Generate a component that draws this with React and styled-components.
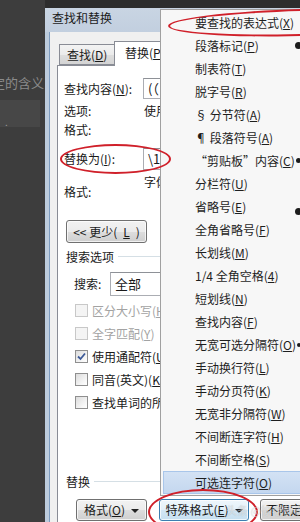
import React from "react";
import styled, { createGlobalStyle } from "styled-components";

const Global = createGlobalStyle`
  html, body { margin: 0; padding: 0; }
  body {
    width: 300px; height: 522px; overflow: hidden; background: #3d3d3d;
    font-family: "Noto Sans CJK SC", "Noto Sans", sans-serif; font-size: 12px;
  }
`;

const Screen = styled.div`
  position: relative;
  width: 300px;
  height: 522px;
  overflow: hidden;
  display: flex;
  background: #3d3d3d;
  color: #1a1a1a;
  font-family: "Noto Sans CJK SC", "Noto Sans", sans-serif;
  font-size: 12px;
`;

const DocSide = styled.div`
  width: 45px;
  flex: none;
  display: flex;
  flex-direction: column;
  overflow: hidden;
`;

const DocText = styled.div`
  margin-top: 74px;
  margin-left: -8px;
  white-space: nowrap;
  font-size: 13px;
  line-height: 18px;
  color: #8b8b8b;
`;

const DocBlock = styled.div`
  margin-top: 8px;
  width: 40px;
  height: 27px;
  background: #474747;
  color: #9a9a9a;
  font-size: 10px;
  line-height: 10px;
  display: flex;
  align-items: flex-end;
  padding-left: 5px;
  box-sizing: border-box;
`;

const DialogCol = styled.div`
  flex: 1;
  display: flex;
  flex-direction: column;
  min-width: 0;
`;

const TopShade = styled.div`
  height: 8px;
  flex: none;
  background: #2d2d2d;
`;

const Dialog = styled.div`
  flex: 1;
  display: flex;
  flex-direction: column;
  background: #bccbdc;
  min-height: 0;
`;

const TitleBar = styled.div`
  height: 24px;
  flex: none;
  padding: 1px 0 0 7px;
  box-sizing: border-box;
  line-height: 18px;
  font-size: 12px;
  color: #1b1b1b;
  background: linear-gradient(#c9d5e3, #c2cfdf);
`;

const Body = styled.div`
  flex: 1;
  margin-left: 4px;
  border-left: 1px solid #7d9bbf;
  background: #f0f0f0;
  padding: 9px 0 0 7px;
  display: flex;
  flex-direction: column;
  min-height: 0;
`;

const Tabs = styled.div`
  display: flex;
  align-items: flex-end;
  height: 24px;
  padding-left: 2px;
  position: relative;
  z-index: 1;
`;

const Tab = styled.div`
  box-sizing: border-box;
  height: ${(p) => (p.$active ? "25px" : "21px")};
  margin-bottom: ${(p) => (p.$active ? "-1px" : "0")};
  margin-left: ${(p) => (p.$active ? "-1px" : "0")};
  padding: ${(p) => (p.$active ? "0 10px 0 10px" : "0 7px 0 7px")};
  width: ${(p) => (p.$active ? "auto" : "56px")};
  border: 1px solid #898c95;
  border-bottom: ${(p) => (p.$active ? "none" : "1px solid #898c95")};
  background: ${(p) =>
    p.$active ? "#ffffff" : "linear-gradient(#f3f3f3, #ebebeb 50%, #dedede 51%, #d4d4d4)"};
  line-height: ${(p) => (p.$active ? "22px" : "19px")};
  white-space: nowrap;
  font-size: 12px;
`;

const Panel = styled.div`
  flex: 1;
  background: #ffffff;
  border: 1px solid #898c95;
  border-right: none;
  border-bottom: none;
  padding-left: 6px;
  display: flex;
  flex-direction: column;
  min-height: 0;
`;

const FieldRow = styled.div`
  display: flex;
  align-items: center;
  height: ${(p) => p.$h || 21}px;
  margin-top: ${(p) => p.$mt || 0}px;
  white-space: nowrap;
`;

const Label = styled.div`
  width: ${(p) => p.$w || 79}px;
  flex: none;
  line-height: 16px;
  margin-top: ${(p) => p.$mt || 0}px;
`;

const InputBox = styled.div`
  flex: 1;
  height: ${(p) => p.$h || 21}px;
  box-sizing: border-box;
  border: 1px solid #abadb3;
  border-top-color: #8e9197;
  padding-left: 4px;
  line-height: ${(p) => (p.$h || 21) - 2}px;
  white-space: nowrap;
  font-size: 13px;
`;

const InfoRow = styled.div`
  display: flex;
  align-items: ${(p) => (p.$top ? "flex-start" : "center")};
  height: ${(p) => p.$h || 18}px;
  margin-top: ${(p) => p.$mt || 0}px;
  white-space: nowrap;
  line-height: 16px;
`;

const Value = styled.div`
  padding-left: 1px;
  line-height: 16px;
`;

const Button = styled.div`
  box-sizing: border-box;
  width: ${(p) => p.$w}px;
  height: ${(p) => p.$h || 22}px;
  flex: none;
  border: 1px solid ${(p) => (p.$focus ? "#3c7fb1" : "#707070")};
  border-radius: 3px;
  background: ${(p) =>
    p.$focus
      ? "linear-gradient(#eef6fb, #e3f0f9 50%, #d3e7f5 51%, #c6dff0)"
      : "linear-gradient(#f2f2f2, #ebebeb 50%, #dddddd 51%, #cfcfcf)"};
  box-shadow: inset 0 0 0 1px rgba(255, 255, 255, 0.7);
  display: flex;
  align-items: center;
  justify-content: ${(p) => (p.$left ? "flex-start" : "center")};
  padding-left: ${(p) => (p.$left ? 5 : 0)}px;
  gap: 6px;
  white-space: nowrap;
  line-height: 16px;
  margin-left: ${(p) => p.$ml || 0}px;
`;

const Arrow = styled.span`
  width: 0;
  height: 0;
  border-left: 4px solid transparent;
  border-right: 4px solid transparent;
  border-top: 4px solid #222;
  margin-top: 1px;
`;

const LessButton = styled(Button)`
  margin-top: 19px;
  margin-left: 2px;
`;

const GroupLabel = styled.div`
  display: flex;
  align-items: center;
  gap: 4px;
  height: 16px;
  line-height: 16px;
  margin-top: ${(p) => p.$mt}px;
  padding-left: 2px;
  white-space: nowrap;
  &::after {
    content: "";
    flex: 1;
    height: 1px;
    margin-top: -2px;
    background: #d5dfe5;
  }
`;

const SearchRow = styled.div`
  display: flex;
  align-items: center;
  margin-top: 7px;
  padding-left: 10px;
  height: 24px;
  white-space: nowrap;
`;

const CheckRow = styled.div`
  display: flex;
  align-items: center;
  gap: 4px;
  height: 23px;
  padding-left: 11px;
  margin-top: ${(p) => p.$mt || 0}px;
  white-space: nowrap;
  color: ${(p) => (p.$disabled ? "#a3a3a3" : "#1a1a1a")};
  line-height: 16px;
`;

const Box = styled.span`
  box-sizing: border-box;
  width: 13px;
  height: 13px;
  flex: none;
  border: 1px solid ${(p) => (p.$disabled ? "#c8c8c8" : "#8f8f8f")};
  background: ${(p) =>
    p.$disabled ? "#f4f4f4" : "linear-gradient(135deg, #dcdcdc, #f6f6f6 70%, #ffffff)"};
  display: flex;
  align-items: center;
  justify-content: center;
`;

const ButtonRow = styled.div`
  display: flex;
  align-items: center;
  margin-top: 9px;
  padding-left: 12px;
`;

const Menu = styled.div`
  position: absolute;
  left: 160px;
  top: 9px;
  width: 150px;
  height: 487px;
  box-sizing: border-box;
  background: #f7f7f7;
  border: 1px solid #a0a0a0;
  padding: 1px 0;
  display: flex;
  flex-direction: column;
  z-index: 5;
`;

const MenuItem = styled.div`
  box-sizing: border-box;
  height: 23px;
  flex: none;
  padding-left: ${(p) => (p.$hl ? 31 : 33)}px;
  margin: ${(p) => (p.$hl ? "0 0 0 2px" : "0")};
  line-height: 21px;
  white-space: nowrap;
  color: #1e1e1e;
  font-size: 12px;
  background: ${(p) => (p.$hl ? "linear-gradient(#d3e2f4, #c4d7ef)" : "transparent")};
  border: 1px solid ${(p) => (p.$hl ? "#a9c6ea" : "transparent")};
`;

const Ellipse = styled.div`
  position: absolute;
  left: ${(p) => p.$x}px;
  top: ${(p) => p.$y}px;
  width: ${(p) => p.$w}px;
  height: ${(p) => p.$h}px;
  border: 2px solid #d0202a;
  border-radius: 50%;
  box-sizing: border-box;
  transform: rotate(${(p) => p.$r || 0}deg);
  z-index: 10;
  pointer-events: none;
`;

const Blob = styled.div`
  position: absolute;
  left: ${(p) => p.$x}px;
  top: ${(p) => p.$y}px;
  width: ${(p) => p.$s}px;
  height: ${(p) => p.$s}px;
  border-radius: 50%;
  background: #1c1c1c;
  filter: blur(0.6px);
  z-index: 6;
`;

const Watermark = styled.div`
  position: absolute;
  left: 226px;
  top: 503px;
  font-size: 11px;
  line-height: 14px;
  color: rgba(255, 255, 255, 0.55);
  text-shadow: 0 0 1px rgba(0, 0, 0, 0.25);
  white-space: nowrap;
  z-index: 11;
`;

const menuItems = [
  ["要查找的表达式(", "X", ")"],
  ["段落标记(", "P", ")"],
  ["制表符(", "T", ")"],
  ["脱字号(", "R", ")"],
  ["§ 分节符(", "A", ")"],
  ["¶ 段落符号(", "A", ")"],
  ["“剪贴板”内容(", "C", ")"],
  ["分栏符(", "U", ")"],
  ["省略号(", "E", ")"],
  ["全角省略号(", "F", ")"],
  ["长划线(", "M", ")"],
  ["1/4 全角空格(", "4", ")"],
  ["短划线(", "N", ")"],
  ["查找内容(", "F", ")"],
  ["无宽可选分隔符(", "O", ")"],
  ["手动换行符(", "L", ")"],
  ["手动分页符(", "K", ")"],
  ["无宽非分隔符(", "W", ")"],
  ["不间断连字符(", "H", ")"],
  ["不间断空格(", "S", ")"],
  ["可选连字符(", "O", ")"],
];

const checks = [
  { t: "区分大小写(", k: "H", disabled: true },
  { t: "全字匹配(", k: "Y", disabled: true },
  { t: "使用通配符(", k: "U", checked: true },
  { t: "同音(英文)(", k: "K" },
  { t: "查找单词的所有形式(英文)(", k: "W" },
];

const Check = () => (
  <svg width="9" height="9" viewBox="0 0 9 9">
    <path d="M1 4.5 L3.5 7 L8 1.5" fill="none" stroke="#3d5a98" strokeWidth="1.8" />
  </svg>
);

export default function App() {
  return (
    <Screen>
      <Global />
      <DocSide>
        <DocText>定的含义</DocText>
        <DocBlock>.</DocBlock>
      </DocSide>
      <DialogCol>
        <TopShade />
        <Dialog>
          <TitleBar>查找和替换</TitleBar>
          <Body>
            <Tabs>
              <Tab>
                查找(<u>D</u>)
              </Tab>
              <Tab $active>
                替换(<u>P</u>)
              </Tab>
            </Tabs>
            <Panel>
              <FieldRow $mt={12}>
                <Label>
                  查找内容(<u>N</u>):
                </Label>
                <InputBox>(（</InputBox>
              </FieldRow>
              <InfoRow $mt={3}>
                <Label>选项:</Label>
                <Value>使用通配符</Value>
              </InfoRow>
              <InfoRow $mt={1}>
                <Label>格式:</Label>
              </InfoRow>
              <FieldRow $mt={9} $h={22}>
                <Label>
                  替换为(<u>I</u>):
                </Label>
                <InputBox $h={22}>\1</InputBox>
              </FieldRow>
              <InfoRow $top $h={27} $mt={4}>
                <Label $mt={10}>格式:</Label>
                <Value>字体颜色: 红色</Value>
              </InfoRow>
              <LessButton $w={81} $h={23}>
                &lt;&lt; 更少(<u>L</u>)
              </LessButton>
              <GroupLabel $mt={6}>搜索选项</GroupLabel>
              <SearchRow>
                <Label $w={36}>搜索:</Label>
                <InputBox $h={24}>全部</InputBox>
              </SearchRow>
              {checks.map((c, i) => (
                <CheckRow key={i} $disabled={c.disabled} $mt={i === 0 ? 3 : 0}>
                  <Box $disabled={c.disabled}>{c.checked && <Check />}</Box>
                  <span>
                    {c.t}
                    <u>{c.k}</u>)
                  </span>
                </CheckRow>
              ))}
              <GroupLabel $mt={60}>替换</GroupLabel>
              <ButtonRow>
                <Button $w={71} $h={22}>
                  <span>
                    格式(<u>O</u>)
                  </span>
                  <Arrow />
                </Button>
                <Button $w={90} $h={22} $ml={12} $focus>
                  <span>
                    特殊格式(<u>E</u>)
                  </span>
                  <Arrow />
                </Button>
                <Button $w={90} $h={22} $ml={11} $left>
                  不限定格式(<u>T</u>)
                </Button>
              </ButtonRow>
            </Panel>
          </Body>
        </Dialog>
      </DialogCol>

      <Menu>
        {menuItems.map((m, i) => (
          <MenuItem key={i} $hl={i === menuItems.length - 1}>
            {m[0]}
            <u>{m[1]}</u>
            {m[2]}
          </MenuItem>
        ))}
      </Menu>

      <Blob $x={295} $y={42} $s={7} />
      <Blob $x={296} $y={158} $s={5} />
      <Blob $x={295} $y={208} $s={7} />
      <Blob $x={297} $y={343} $s={4} />

      <Ellipse $x={168} $y={9} $w={270} $h={27} $r={-1.5} />
      <Ellipse $x={60} $y={144} $w={111} $h={30} />
      <Ellipse $x={148} $y={489} $w={110} $h={46} />

      <Watermark>头条 @徐老师说办公</Watermark>
    </Screen>
  );
}
